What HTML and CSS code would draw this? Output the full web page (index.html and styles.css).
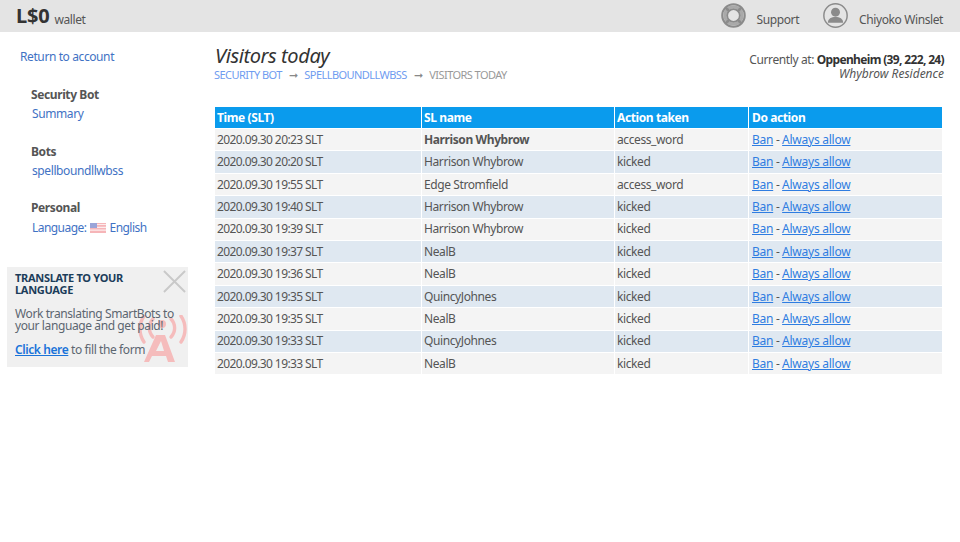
FILE: index.html
```html
<!DOCTYPE html>
<html lang="en">
<head>
<meta charset="utf-8">
<title>Visitors today</title>
<link rel="stylesheet" href="styles.css">
</head>
<body>
<header class="topbar">
  <div class="brand"><span class="balance">L$0</span><span class="wallet">wallet</span></div>
  <nav class="topnav">
    <svg class="topicon" viewBox="0 0 24 24" aria-hidden="true"><circle cx="12" cy="12" r="10.800" fill="none" stroke="#8b8b8b" stroke-width="2"/><circle cx="12" cy="12" r="6.200" fill="none" stroke="#8b8b8b" stroke-width="2"/><circle cx="12" cy="12" r="8.300" fill="none" stroke="#a9a9a9" stroke-width="3"/><path d="M4.600 4.600L8 8M19.400 4.600L16 8M4.600 19.400L8 16M19.400 19.400L16 16" stroke="#8b8b8b" stroke-width="2.600"/></svg>
    <span class="toplabel support">Support</span>
    <svg class="topicon" viewBox="0 0 24 24" aria-hidden="true"><circle cx="12" cy="12" r="11.200" fill="none" stroke="#8b8b8b" stroke-width="1.400"/><circle cx="12" cy="8.800" r="4.300" fill="#8b8b8b"/><path d="M4.700 19c0-3.900 3.300-5.500 7.300-5.500s7.300 1.600 7.300 5.500z" fill="#8b8b8b"/></svg>
    <span class="toplabel">Chiyoko Winslet</span>
  </nav>
</header>
<div class="page">
  <aside class="sidebar">
    <a class="link return" href="#">Return to account</a>
    <section class="menu">
      <h3>Security Bot</h3>
      <a class="link" href="#">Summary</a>
    </section>
    <section class="menu">
      <h3>Bots</h3>
      <a class="link" href="#">spellboundllwbss</a>
    </section>
    <section class="menu menu-personal">
      <h3>Personal</h3>
      <a class="link lang" href="#">Language:
        <svg class="flag" viewBox="0 0 16 10" aria-hidden="true"><rect width="16" height="10" fill="#f6b5b8"/><path d="M0 1.500h16M0 4.300h16M0 7.100h16" stroke="#fff" stroke-width="1.200" opacity=".75"/><rect width="7" height="5" fill="#9aa4d8"/></svg>
        English</a>
    </section>
    <div class="promo">
      <svg class="promo-close" viewBox="0 0 24 24" aria-hidden="true"><path d="M1 1L23 23M23 1L1 23" stroke="#c9c9c9" stroke-width="2"/></svg>
      <svg class="promo-mark" viewBox="0 0 54 48" aria-hidden="true"><g fill="none" stroke="#f5bcbc" stroke-width="3.400" stroke-linecap="round"><path d="M15 4a13 13 0 0 0 0 18M33 4a13 13 0 0 1 0 18"/><path d="M6 1a23 23 0 0 0 0 26M43 1a23 23 0 0 1 0 26"/></g><circle cx="24" cy="9" r="4" fill="#f5bcbc"/><path d="M18 20h9l10 27h-7l-2-6H14l-3 6H6zM18 36h8l-3-10z" fill="#f5bcbc" fill-rule="evenodd"/></svg>
      <h4>Translate to your language</h4>
      <p>Work translating SmartBots to your language and get paid!</p>
      <p class="promo-last"><a href="#">Click here</a> to fill the form</p>
    </div>
  </aside>
  <main class="content">
    <div class="headrow">
      <div>
        <h1>Visitors today</h1>
        <div class="crumbs"><a href="#">SECURITY BOT</a><span class="arrow">➞</span><a href="#">SPELLBOUNDLLWBSS</a><span class="arrow">➞</span><span>VISITORS TODAY</span></div>
      </div>
      <div class="location">
        <div>Currently at: <b>Oppenheim (39, 222, 24)</b></div>
        <div><i>Whybrow Residence</i></div>
      </div>
    </div>
    <table class="log">
      <colgroup><col class="c1"><col class="c2"><col class="c3"><col class="c4"></colgroup>
      <thead><tr><th>Time (SLT)</th><th>SL name</th><th>Action taken</th><th>Do action</th></tr></thead>
      <tbody>
        <tr><td>2020.09.30 20:23 SLT</td><td><b>Harrison Whybrow</b></td><td>access_word</td><td><a href="#">Ban</a> - <a href="#">Always allow</a></td></tr>
        <tr><td>2020.09.30 20:20 SLT</td><td>Harrison Whybrow</td><td>kicked</td><td><a href="#">Ban</a> - <a href="#">Always allow</a></td></tr>
        <tr><td>2020.09.30 19:55 SLT</td><td>Edge Stromfield</td><td>access_word</td><td><a href="#">Ban</a> - <a href="#">Always allow</a></td></tr>
        <tr><td>2020.09.30 19:40 SLT</td><td>Harrison Whybrow</td><td>kicked</td><td><a href="#">Ban</a> - <a href="#">Always allow</a></td></tr>
        <tr><td>2020.09.30 19:39 SLT</td><td>Harrison Whybrow</td><td>kicked</td><td><a href="#">Ban</a> - <a href="#">Always allow</a></td></tr>
        <tr><td>2020.09.30 19:37 SLT</td><td>NealB</td><td>kicked</td><td><a href="#">Ban</a> - <a href="#">Always allow</a></td></tr>
        <tr><td>2020.09.30 19:36 SLT</td><td>NealB</td><td>kicked</td><td><a href="#">Ban</a> - <a href="#">Always allow</a></td></tr>
        <tr><td>2020.09.30 19:35 SLT</td><td>QuincyJohnes</td><td>kicked</td><td><a href="#">Ban</a> - <a href="#">Always allow</a></td></tr>
        <tr><td>2020.09.30 19:35 SLT</td><td>NealB</td><td>kicked</td><td><a href="#">Ban</a> - <a href="#">Always allow</a></td></tr>
        <tr><td>2020.09.30 19:33 SLT</td><td>QuincyJohnes</td><td>kicked</td><td><a href="#">Ban</a> - <a href="#">Always allow</a></td></tr>
        <tr><td>2020.09.30 19:33 SLT</td><td>NealB</td><td>kicked</td><td><a href="#">Ban</a> - <a href="#">Always allow</a></td></tr>
      </tbody>
    </table>
  </main>
</div>
</body>
</html>
```
FILE: styles.css
```css
* { box-sizing: border-box; }
html, body { margin: 0; height: 100%; }
body { background: #fff; color: #555; font: 12px/15px "Noto Sans", sans-serif; letter-spacing: -0.4px; overflow: hidden; }
a { color: #3f72c4; text-decoration: none; }
h1, h3, h4, p { margin: 0; }

.topbar { height: 32px; background: #e4e4e4; display: flex; justify-content: space-between; align-items: center; padding: 0 17px 0 16px; }
.brand { display: flex; align-items: baseline; }
.balance { font-size: 20px; font-weight: 700; color: #333; line-height: 32px; letter-spacing: -0.2px; }
.wallet { font-size: 12px; margin-left: 5px; color: #555; position: relative; top: 1px; }
.topnav { display: flex; align-items: center; }
.topicon { width: 25px; height: 25px; display: block; margin-top: -2px; }
.toplabel { font-size: 12px; color: #555; margin-left: 11px; margin-top: 7px; }
.support { margin-right: 24px; }

.page { display: flex; }
.sidebar { width: 215px; flex: none; padding: 17px 27px 0 7px; }
.link { color: #3f72c4; display: block; }
.return { margin-left: 13px; }
.menu { margin: 23px 0 0 25px; }
.menu + .menu { margin-top: 23px; }
.menu + .menu-personal { margin-top: 22px; }
.menu h3 { font-size: 12px; font-weight: 700; color: #555; line-height: 15px; margin: 0 0 4px -1px; }
.lang { letter-spacing: -0.55px; margin-top: 5px; }
.flag { width: 16px; height: 10px; display: inline-block; vertical-align: -0.5px; margin: 0 1px; }

.promo { position: relative; margin-top: 32px; background: #f0f0f0; height: 100px; width: 181px; padding: 5px 8px; color: #5c6670; overflow: hidden; }
.promo h4 { font-size: 11px; font-weight: 700; line-height: 12px; letter-spacing: -0.3px; text-transform: uppercase; color: #1c3d5a; margin-bottom: 12px; width: 130px; }
.promo p { line-height: 12px; position: relative; }
.promo-last { margin-top: 12px; }
.promo a { color: #1a73d9; text-decoration: underline; font-weight: 600; }
.promo-close { position: absolute; top: 3px; right: 2px; width: 23px; height: 23px; }
.promo-mark { position: absolute; left: 131px; top: 48px; width: 54px; height: 48px; }

.content { flex: none; width: 727px; padding-top: 13px; }
.headrow { display: flex; justify-content: space-between; height: 62px; }
h1 { font-size: 20px; font-weight: 400; font-style: italic; color: #333; line-height: 21px; }
.crumbs { font-size: 11px; line-height: 15px; color: #999; margin-left: -1px; margin-top: 1px; letter-spacing: -0.55px; }
.crumbs a { color: #6f9cf0; }
.arrow { color: #888; margin: 0 7px; }
.location { text-align: right; margin-right: -2px; margin-top: 8px; line-height: 14px; color: #555; }
.location b { color: #333; letter-spacing: -0.65px; }
.location i { letter-spacing: 0; }

.log { border-collapse: separate; border-spacing: 0; width: 727px; table-layout: fixed; }
.c1 { width: 207px; } .c2 { width: 193px; } .c3 { width: 134px; } .c4 { width: 193px; }
.log th { background: #0a9bed; color: #fff; font-weight: 700; text-align: left; height: 21px; padding: 0 2px; border-right: 1px solid #fff; }
.log th:last-child, .log td:last-child { border-right: 0; padding-left: 3px; }
.log td { height: 22.4px; padding: 0 2px 0.6px; background: #f4f4f4; border-right: 1px solid #fff; border-top: 1px solid #fff; white-space: nowrap; }
.log td:first-child { letter-spacing: -0.6px; }
.log tbody tr:nth-child(even) td { background: #dfe8f1; }
.log td a { color: #2f7de1; text-decoration: underline; letter-spacing: -0.25px; }
```
